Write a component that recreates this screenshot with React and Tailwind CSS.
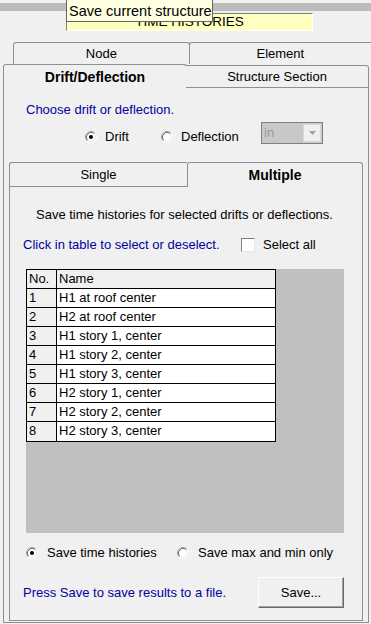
import React from "react";

const F = { fontFamily: '"Liberation Sans", Arial, sans-serif' };

function Radio({ checked }) {
  return (
    <svg width="12" height="12" viewBox="0 0 12 12" className="shrink-0">
      <circle cx="6" cy="6" r="5.5" fill="#ffffff" />
      <path d="M2.11 9.89 A5.5 5.5 0 0 1 9.89 2.11" stroke="#a0a0a0" fill="none" strokeWidth="1" />
      <path d="M2.82 9.18 A4.5 4.5 0 0 1 9.18 2.82" stroke="#696969" fill="none" strokeWidth="1" />
      <path d="M9.89 2.11 A5.5 5.5 0 0 1 2.11 9.89" stroke="#ffffff" fill="none" strokeWidth="1" />
      <path d="M9.18 2.82 A4.5 4.5 0 0 1 2.82 9.18" stroke="#e3e3e3" fill="none" strokeWidth="1" />
      {checked && <circle cx="6" cy="6" r="2" fill="#000000" />}
    </svg>
  );
}

const rows = [
  "H1 at roof center",
  "H2 at roof center",
  "H1 story 1, center",
  "H1 story 2, center",
  "H1 story 3, center",
  "H2 story 1, center",
  "H2 story 2, center",
  "H2 story 3, center",
];

export default function App() {
  return (
    <div
      className="relative w-[371px] h-[624px] overflow-hidden bg-[#f0f0f0] text-[13px] text-black"
      style={F}
    >
      {/* top gray bar */}
      <div className="pt-[3px]">
        <div className="h-[8px] bg-[#bcbcbc]" />
      </div>

      {/* title box */}
      <div className="ml-[66px] mt-[2px] w-[247px] h-[18px] bg-[#ffffc0] border-t border-l border-[#808080] border-r border-r-[#ffffff] border-b border-b-[#ffffff] text-center text-[13.5px] leading-[16px]">
        TIME HISTORIES
      </div>

      {/* outer tabs */}
      <div className="mt-[11px]">
        <div className="flex pl-[13px] h-[22px]">
          <div className="w-[184px] h-[22px] border-t border-l border-r border-[#8e8f8f] rounded-t-[3px] flex items-center justify-center leading-none">
            Node
          </div>
          <div className="-ml-px w-[190px] h-[22px] border-t border-l border-[#8e8f8f] rounded-tl-[3px] flex items-center justify-center leading-none">
            Element
          </div>
        </div>
        <div className="flex pl-[3px] h-[24px] bg-[#f0f0f0]">
          <div className="w-[184px] h-[24px] border-t border-l border-r border-[#8e8f8f] rounded-t-[3px] bg-[#f0f0f0] flex items-center justify-center font-bold text-[14px] leading-none">
            Drift/Deflection
          </div>
          <div className="-ml-px mt-[1px] w-[183px] h-[23px] border-t border-r border-b border-[#8e8f8f] rounded-tr-[3px] bg-[#f0f0f0] flex items-center justify-center leading-none">
            Structure Section
          </div>
        </div>
      </div>

      {/* outer panel */}
      <div className="ml-[3px] w-[366px] h-[535px] border-l border-r border-b border-[#8e8f8f]">
        <div className="pl-[22px] pt-[14px] leading-[16px] text-[#0000a0]">Choose drift or deflection.</div>

        <div className="flex items-start mt-[4px] h-[22px]">
          <div className="flex items-center ml-[81px] mt-[7px] h-[16px] w-[76px]">
            <Radio checked />
            <span className="ml-[8px] leading-[16px]">Drift</span>
          </div>
          <div className="flex items-center mt-[7px] h-[16px] w-[100px]">
            <Radio />
            <span className="ml-[8px] leading-[16px]">Deflection</span>
          </div>
          <div className="w-[62px] h-[22px] border border-[#808080] bg-[#c8c8c8] flex items-stretch">
            <div className="flex-1 pl-[2px] text-[#9a9a9a] leading-[20px]">in</div>
            <div className="w-[18px] my-[1px] mr-[1px] bg-[#f0f0f0] border border-[#d8d8d8] flex items-center justify-center">
              <svg width="7" height="4" viewBox="0 0 7 4">
                <path d="M0 0 H7 L3.5 4 Z" fill="#a0a0a0" />
              </svg>
            </div>
          </div>
        </div>

        {/* inner tabs */}
        <div className="flex ml-[5px] mt-[18px] h-[25px]">
          <div className="w-[178px] h-[25px] border-t border-l border-b border-[#8e8f8f] rounded-tl-[3px] flex items-center justify-center leading-none">
            Single
          </div>
          <div className="w-[176px] h-[25px] border-t border-l border-r border-[#8e8f8f] rounded-t-[3px] flex items-center justify-center font-bold text-[14px] leading-none">
            Multiple
          </div>
        </div>

        {/* inner panel */}
        <div className="ml-[5px] w-[354px] h-[434px] border-l border-r border-b border-[#8e8f8f]">
          <div className="pl-[26px] pt-[20px] leading-[16px]">
            Save time histories for selected drifts or deflections.
          </div>

          <div className="flex items-center pl-[13px] mt-[14px] h-[16px]">
            <span className="w-[218px] leading-[16px] text-[#0000a0]">Click in table to select or deselect.</span>
            <div className="w-[14px] h-[14px] bg-white border-t border-l border-[#808080] border-r border-r-[#e8e8e8] border-b border-b-[#e8e8e8]" />
            <span className="ml-[8px] leading-[16px]">Select all</span>
          </div>

          <div className="ml-[16px] mt-[16px] w-[318px] h-[264px] bg-[#c0c0c0]">
            <div className="w-[250px] border border-black">
              <div className="flex h-[19px] border-b border-black bg-[#f0f0f0]">
                <div className="w-[30px] border-r border-black pl-[2px] leading-[18px]">No.</div>
                <div className="flex-1 pl-[2px] leading-[18px]">Name</div>
              </div>
              {rows.map((r, i) => (
                <div
                  key={i}
                  className={`flex h-[19px] ${i < rows.length - 1 ? "border-b border-black" : ""}`}
                >
                  <div className="w-[30px] border-r border-black bg-[#f0f0f0] pl-[2px] leading-[18px]">{i + 1}</div>
                  <div className="flex-1 bg-white pl-[2px] leading-[18px]">{r}</div>
                </div>
              ))}
            </div>
          </div>

          <div className="flex items-center mt-[12px] h-[16px] pl-[16px]">
            <div className="flex items-center w-[151px]">
              <Radio checked />
              <span className="ml-[9px] leading-[16px]">Save time histories</span>
            </div>
            <Radio />
            <span className="ml-[9px] leading-[16px]">Save max and min only</span>
          </div>

          <div className="flex items-center mt-[16px] h-[31px] pl-[13px]">
            <span className="leading-[16px] text-[#0000a0]">Press Save to save results to a file.</span>
            <div className="ml-auto mr-[18px] w-[86px] h-[31px] bg-[#f0f0f0] border-t border-l border-white border-r border-r-[#696969] border-b border-b-[#696969] shadow-[inset_-1px_-1px_0_#a0a0a0] flex items-center justify-center leading-none">
              Save...
            </div>
          </div>
        </div>
      </div>

      {/* tooltip */}
      <div className="absolute left-[66px] top-[-1px] w-[147px] h-[23px] bg-[#ffffe1] border border-[#646464] pl-[2px] text-[14.5px] leading-[22px]">
        Save current structure
      </div>
    </div>
  );
}
